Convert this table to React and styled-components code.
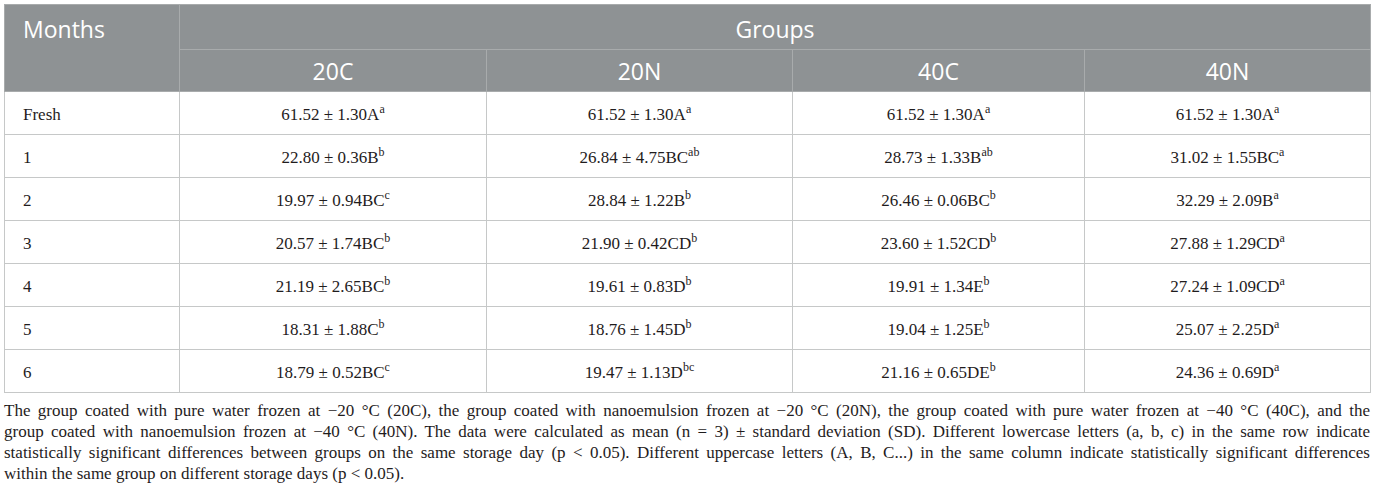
import React from 'react'
import styled, { createGlobalStyle } from 'styled-components'

const groups = ['20C', '20N', '40C', '40N']
const widths = [175, 307, 306, 292, 286]

const rows = [
  ['Fresh', ['61.52 ± 1.30A', 'a'], ['61.52 ± 1.30A', 'a'], ['61.52 ± 1.30A', 'a'], ['61.52 ± 1.30A', 'a']],
  ['1', ['22.80 ± 0.36B', 'b'], ['26.84 ± 4.75BC', 'ab'], ['28.73 ± 1.33B', 'ab'], ['31.02 ± 1.55BC', 'a']],
  ['2', ['19.97 ± 0.94BC', 'c'], ['28.84 ± 1.22B', 'b'], ['26.46 ± 0.06BC', 'b'], ['32.29 ± 2.09B', 'a']],
  ['3', ['20.57 ± 1.74BC', 'b'], ['21.90 ± 0.42CD', 'b'], ['23.60 ± 1.52CD', 'b'], ['27.88 ± 1.29CD', 'a']],
  ['4', ['21.19 ± 2.65BC', 'b'], ['19.61 ± 0.83D', 'b'], ['19.91 ± 1.34E', 'b'], ['27.24 ± 1.09CD', 'a']],
  ['5', ['18.31 ± 1.88C', 'b'], ['18.76 ± 1.45D', 'b'], ['19.04 ± 1.25E', 'b'], ['25.07 ± 2.25D', 'a']],
  ['6', ['18.79 ± 0.52BC', 'c'], ['19.47 ± 1.13D', 'bc'], ['21.16 ± 0.65DE', 'b'], ['24.36 ± 0.69D', 'a']],
]

const noteLines = [
  'The group coated with pure water frozen at \u221220 \u00b0C (20C), the group coated with nanoemulsion frozen at \u221220 \u00b0C (20N), the group coated with pure water frozen at \u221240 \u00b0C (40C), and the',
  'group coated with nanoemulsion frozen at \u221240 \u00b0C (40N). The data were calculated as mean (n = 3) \u00b1 standard deviation (SD). Different lowercase letters (a, b, c) in the same row indicate',
  'statistically significant differences between groups on the same storage day (p < 0.05). Different uppercase letters (A, B, C...) in the same column indicate statistically significant differences',
  'within the same group on different storage days (p < 0.05).',
]

const App = () => {
  return (
    <Page>
      <GlobalStyle />
      <Table>
        <colgroup>
          {widths.map((w, i) => (
            <Col key={i} $width={w} />
          ))}
        </colgroup>
        <thead>
          <tr>
            <HeadCell rowSpan={2} $align="left" $top>
              Months
            </HeadCell>
            <HeadCell colSpan={4} $height={45} $top>
              Groups
            </HeadCell>
          </tr>
          <tr>
            {groups.map((g) => (
              <HeadCell key={g} $height={42}>
                {g}
              </HeadCell>
            ))}
          </tr>
        </thead>
        <tbody>
          {rows.map(([month, ...cells]) => (
            <tr key={month}>
              <Cell $align="left">{month}</Cell>
              {cells.map(([value, sup], i) => (
                <Cell key={i}>
                  {value}
                  <Sup>{sup}</Sup>
                </Cell>
              ))}
            </tr>
          ))}
        </tbody>
      </Table>
      <Note>
        {noteLines.map((line, i) => (
          <NoteLine key={i} $last={i === noteLines.length - 1}>
            {line}
          </NoteLine>
        ))}
      </Note>
    </Page>
  )
}

const GlobalStyle = createGlobalStyle`
  body {
    margin: 0;
    background: #ffffff;
    color: #1f1c1d;
    font-family: 'Liberation Serif', 'Times New Roman', serif;
  }
`

const Page = styled.div`
  padding: 4px 5px 0 4px;
  width: 1366px;
`

const Table = styled.table`
  width: 1366px;
  table-layout: fixed;
  border-collapse: collapse;
  border: 1px solid #c6c8c8;
`

const Col = styled.col`
  width: ${(p) => p.$width}px;
`

const HeadCell = styled.th`
  background: #8e9294;
  color: #ffffff;
  font-family: 'Open Sans', 'Noto Sans', sans-serif;
  font-weight: 400;
  font-size: 23px;
  line-height: 26px;
  text-align: ${(p) => p.$align || 'center'};
  vertical-align: ${(p) => (p.$top ? 'top' : 'middle')};
  height: ${(p) => (p.$height ? `${p.$height}px` : 'auto')};
  padding: ${(p) => (p.$top ? '11px 18px 0' : '0 18px')};
  border: 1px solid #a8abac;
  box-sizing: border-box;
`

const Cell = styled.td`
  height: 39px;
  padding: 3px 18px 0;
  font-family: 'Liberation Serif', 'Times New Roman', serif;
  font-size: 17px;
  color: #1f1c1d;
  text-align: ${(p) => p.$align || 'center'};
  vertical-align: middle;
  border: 1px solid #c6c8c8;
  white-space: nowrap;
`

const Sup = styled.sup`
  font-size: 12px;
  line-height: 0;
  vertical-align: 7px;
`

const Note = styled.div`
  margin-top: 7px;
  font-size: 17px;
  line-height: 21px;
  color: #1f1c1d;
`

const NoteLine = styled.span`
  display: block;
  text-align: justify;
  text-align-last: ${(p) => (p.$last ? 'left' : 'justify')};
  white-space: nowrap;
`

export default App
